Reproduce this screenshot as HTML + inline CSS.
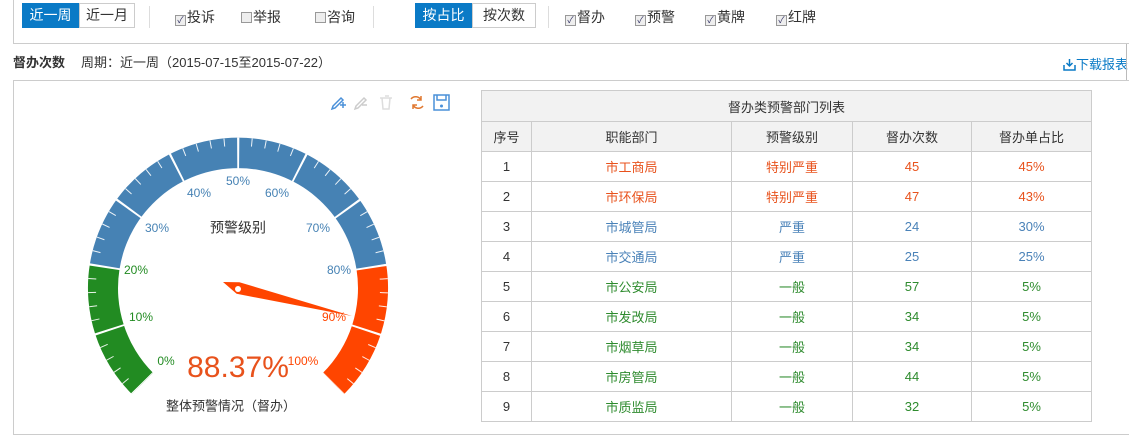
<!DOCTYPE html>
<html><head><meta charset="utf-8"><style>
*{margin:0;padding:0;box-sizing:border-box}
body{width:1129px;height:442px;overflow:hidden;background:#fff;font-family:"Liberation Sans","Noto Sans CJK SC",sans-serif;font-size:13px;color:#333;position:relative}
.a{position:absolute}
.btn{position:absolute;top:3px;height:25px;line-height:23px;border:1px solid #ccc;font-size:14px;text-align:center;color:#333}
.on{background:#0a7ac6;color:#fff;border-color:#0a7ac6}
.sep{position:absolute;top:6px;width:1px;height:22px;background:#ddd}
.cb{position:absolute;top:9px;font-size:14px;line-height:16px}
.cb i{display:inline-block;width:11px;height:11px;border:1px solid #999;background:#eee;vertical-align:-1px;margin-right:1px;font-style:normal;font-size:9px;line-height:9px;text-align:center;color:#336}
table{position:absolute;left:481px;top:90px;border-collapse:collapse;font-size:13px}
td{border:1px solid #ccc;height:30px;text-align:center;padding:0}
.h td{background:#f2f2f2;color:#333}
.r td{color:#e8521c}.b td{color:#4a82b8}.g td{color:#2e8b2e}
tr td:first-child{color:#333}
</style></head><body>
<div class="a" style="left:13px;top:0;width:1116px;height:44px;border-left:1px solid #ccc;border-bottom:1px solid #ccc"></div>
<div class="btn on" style="left:22px;width:57px">近一周</div>
<div class="btn" style="left:79px;width:56px">近一月</div>
<div class="sep" style="left:149px"></div>
<div class="cb" style="left:175px"><i>✓</i>投诉</div>
<div class="cb" style="left:241px"><i></i>举报</div>
<div class="cb" style="left:315px"><i></i>咨询</div>
<div class="sep" style="left:373px"></div>
<div class="btn on" style="left:415px;width:57px">按占比</div>
<div class="btn" style="left:472px;width:64px">按次数</div>
<div class="sep" style="left:548px"></div>
<div class="cb" style="left:565px"><i>✓</i>督办</div>
<div class="cb" style="left:635px"><i>✓</i>预警</div>
<div class="cb" style="left:705px"><i>✓</i>黄牌</div>
<div class="cb" style="left:776px"><i>✓</i>红牌</div>
<div class="a" style="left:13px;top:52px;font-weight:bold;font-size:13px">督办次数</div>
<div class="a" style="left:81px;top:52px;font-size:13px">周期：近一周（2015-07-15至2015-07-22）</div>
<div class="a" style="left:1063px;top:54px;color:#0a7ac6;font-size:13px"><svg width="13" height="13" style="vertical-align:-2px"><path d="M6.5 1v7M3.5 5l3 3 3-3M1 7v5h11V7" stroke="#0a7ac6" stroke-width="1.5" fill="none"/></svg>下载报表</div>
<div class="a" style="left:1126px;top:44px;width:1px;height:36px;background:#bbb"></div>
<div class="a" style="left:13px;top:80px;width:1116px;height:355px;border:1px solid #ccc;border-right:none"></div>
<svg class="a" style="left:0;top:0" width="480" height="442">
<g fill="none" stroke-width="1.5">
<path d="M333 106l8-8 2 2-8 8-3 1z M343 102v6M340 105h6" stroke="#4a90d9"/>
<path d="M356 106l8-8 2 2-8 8-3 1z M362 105h5" stroke="#ccc"/>
<path d="M380 98h12M382 98l1 11h6l1-11M385 96h4" stroke="#ddd"/>
<path d="M411 99a6 6 0 0 1 10 1M423 106a6 6 0 0 1-10-1M421 96v4h-4M413 109v-4h4" stroke="#e07830"/>
<path d="M434 95h15v15h-15zM437 95v5h9v-5" stroke="#4a90d9"/>
</g>
<circle cx="441.5" cy="106" r="1.5" fill="#4a90d9"/>
<path d="M131.9,394.1 A150,150 0 0 1 89.8,264.5 L119.5,269.2 A120,120 0 0 0 153.1,372.9 Z" fill="#228b22"/>
<path d="M89.8,264.5 A150,150 0 0 1 386.2,264.5 L356.5,269.2 A120,120 0 0 0 119.5,269.2 Z" fill="#4682b4"/>
<path d="M386.2,264.5 A150,150 0 0 1 344.1,394.1 L322.9,372.9 A120,120 0 0 0 356.5,269.2 Z" fill="#ff4500"/>
<path d="M134.8,391.2 A146,146 0 1 1 341.2,391.2" fill="none" stroke="#fff" stroke-width="8" stroke-dasharray="1 12.76" stroke-dashoffset="0.5" opacity=".9"/>
<path d="M142.5,383.5 A135,135 0 1 1 333.5,383.5" fill="none" stroke="#fff" stroke-width="31" stroke-dasharray="2 61.62" stroke-dashoffset="1"/>
<g font-size="12" text-anchor="middle" dominant-baseline="middle">
<text x="166" y="362" fill="#228b22">0%</text>
<text x="141" y="318" fill="#228b22">10%</text>
<text x="136" y="271" fill="#228b22">20%</text>
<text x="157" y="229" fill="#4682b4">30%</text>
<text x="199" y="194" fill="#4682b4">40%</text>
<text x="238" y="182" fill="#4682b4">50%</text>
<text x="277" y="194" fill="#4682b4">60%</text>
<text x="318" y="229" fill="#4682b4">70%</text>
<text x="339" y="271" fill="#4682b4">80%</text>
<text x="334" y="318" fill="#ff4500">90%</text>
<text x="303" y="362" fill="#ff4500">100%</text>
<text x="238" y="229" fill="#333" font-size="14">预警级别</text>
<text x="238" y="369" fill="#e8521c" font-size="30">88.37%</text>
<text x="231" y="407" fill="#333" font-size="13">整体预警情况（督办）</text>
</g>
<polygon points="352,316 236.6,293.8 223,282 239.4,282.2" fill="#ff4500"/>
<circle cx="238" cy="289" r="3" fill="#fff"/>
</svg>
<table>
<tr class="h"><td colspan="5" style="height:31px;width:610px">督办类预警部门列表</td></tr>
<tr class="h"><td style="width:50px">序号</td><td style="width:200px">职能部门</td><td style="width:121px">预警级别</td><td style="width:119px">督办次数</td><td style="width:120px">督办单占比</td></tr>
<tr class="r"><td>1</td><td>市工商局</td><td>特别严重</td><td>45</td><td>45%</td></tr>
<tr class="r"><td>2</td><td>市环保局</td><td>特别严重</td><td>47</td><td>43%</td></tr>
<tr class="b"><td>3</td><td>市城管局</td><td>严重</td><td>24</td><td>30%</td></tr>
<tr class="b"><td>4</td><td>市交通局</td><td>严重</td><td>25</td><td>25%</td></tr>
<tr class="g"><td>5</td><td>市公安局</td><td>一般</td><td>57</td><td>5%</td></tr>
<tr class="g"><td>6</td><td>市发改局</td><td>一般</td><td>34</td><td>5%</td></tr>
<tr class="g"><td>7</td><td>市烟草局</td><td>一般</td><td>34</td><td>5%</td></tr>
<tr class="g"><td>8</td><td>市房管局</td><td>一般</td><td>44</td><td>5%</td></tr>
<tr class="g"><td>9</td><td>市质监局</td><td>一般</td><td>32</td><td>5%</td></tr>
</table>
</body></html>
